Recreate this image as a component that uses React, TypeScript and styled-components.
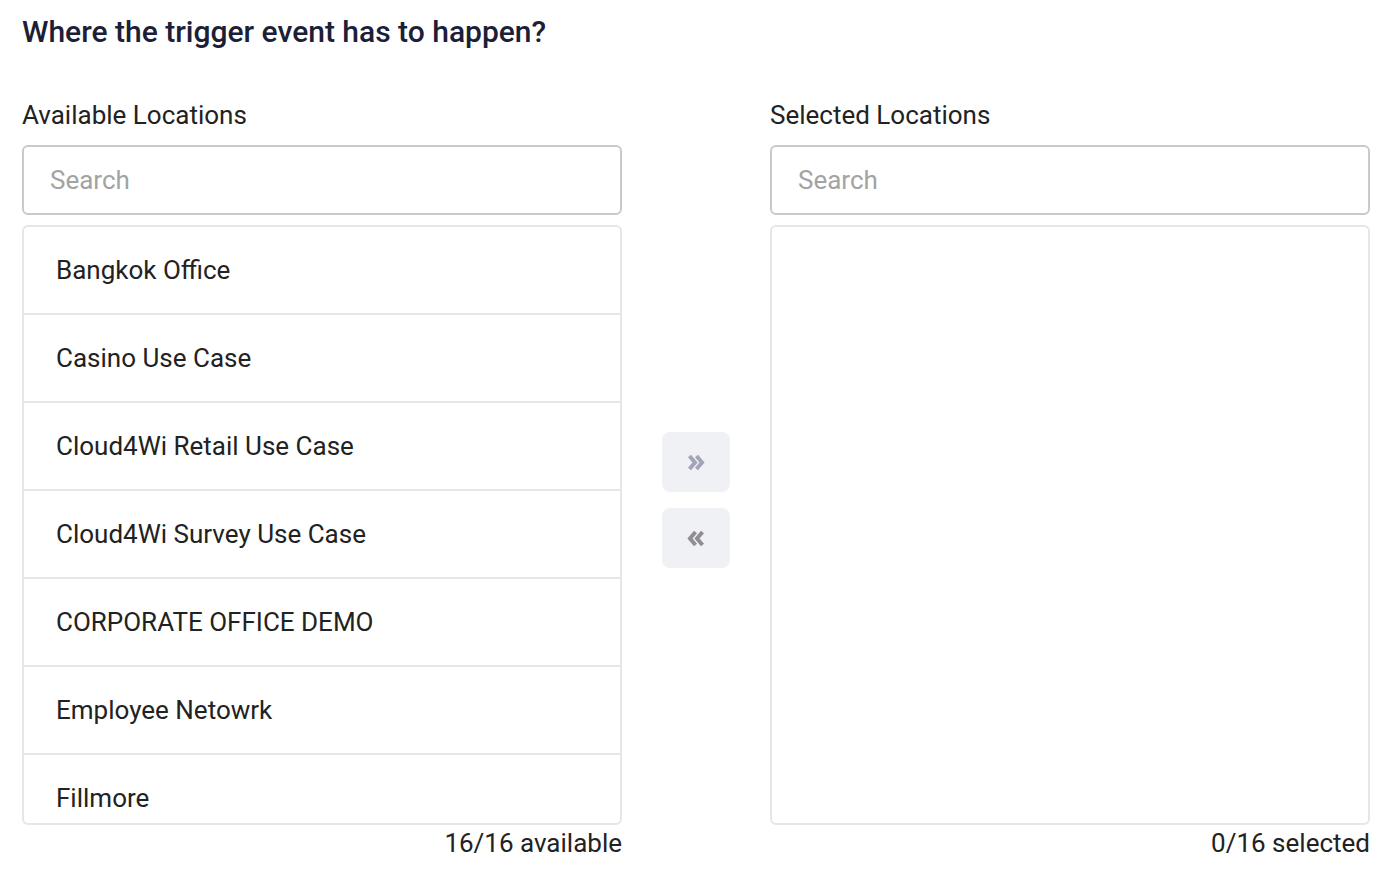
import styled, { createGlobalStyle } from 'styled-components';

const GlobalStyle = createGlobalStyle`
    body {
        margin: 0;
        background: #fff;
        font-family: Roboto, "Liberation Sans", sans-serif;
    }
`;

const Page = styled.div`
    padding: 16px 12px 0 22px;
`;

const Title = styled.h2`
    margin: 0;
    font-size: 30px;
    line-height: 32px;
    font-weight: 500;
    color: #1b2036;
`;

const Picker = styled.div`
    display: grid;
    grid-template-columns: 600px 148px 600px;
    margin-top: 53px;
`;

const Column = styled.div`
    display: flex;
    flex-direction: column;
`;

const Label = styled.div`
    font-size: 26px;
    line-height: 28px;
    color: #222;
    margin-bottom: 16px;
`;

const SearchInput = styled.input`
    box-sizing: border-box;
    height: 70px;
    width: 100%;
    border: 2px solid #c9c9c9;
    border-radius: 6px;
    padding: 0 26px;
    font-family: inherit;
    font-size: 26px;
    color: #222;
    outline: none;
    &::placeholder {
        color: #a3a3a3;
    }
`;

const ListBox = styled.ul`
    box-sizing: border-box;
    margin: 10px 0 0;
    padding: 0;
    list-style: none;
    height: 600px;
    border: 2px solid #e6e6e6;
    border-radius: 6px;
    overflow: hidden;
`;

const ListItem = styled.li`
    height: 86px;
    border-bottom: 2px solid #e6e6e6;
    display: flex;
    align-items: center;
    padding-left: 32px;
    font-size: 26px;
    color: #222;
    flex-shrink: 0;
`;

const Counter = styled.div`
    margin-top: 4px;
    text-align: right;
    font-size: 26px;
    line-height: 28px;
    color: #222;
`;

const Actions = styled.div`
    display: flex;
    flex-direction: column;
    align-items: center;
    gap: 16px;
    padding-top: 331px;
`;

const MoveButton = styled.button<{ $tone: string }>`
    width: 68px;
    height: 60px;
    border: none;
    border-radius: 8px;
    background: #f0f1f5;
    color: ${p => p.$tone};
    display: flex;
    align-items: center;
    justify-content: center;
    cursor: pointer;
    padding: 0;
`;

const Chevrons = ({ dir }: { dir: 'right' | 'left' }) => (
    <svg width="18" height="17" viewBox="0 0 18 17" fill="none"
        style={{ transform: dir === 'left' ? 'scaleX(-1)' : undefined }}>
        <polyline points="2.5,2 8,8.5 2.5,15" stroke="currentColor" strokeWidth="4" strokeLinejoin="miter" />
        <polyline points="9.5,2 15,8.5 9.5,15" stroke="currentColor" strokeWidth="4" strokeLinejoin="miter" />
    </svg>
);

const locations = [
    'Bangkok Office',
    'Casino Use Case',
    'Cloud4Wi Retail Use Case',
    'Cloud4Wi Survey Use Case',
    'CORPORATE OFFICE DEMO',
    'Employee Netowrk',
    'Fillmore',
];

const App = () => {
    return <Page>
        <GlobalStyle />
        <Title>Where the trigger event has to happen?</Title>
        <Picker>
            <Column>
                <Label>Available Locations</Label>
                <SearchInput placeholder="Search" />
                <ListBox>
                    {locations.map(name => <ListItem key={name}>{name}</ListItem>)}
                </ListBox>
                <Counter>16/16 available</Counter>
            </Column>
            <Actions>
                <MoveButton $tone="#a2a5ba"><Chevrons dir="right" /></MoveButton>
                <MoveButton $tone="#8f8f93"><Chevrons dir="left" /></MoveButton>
            </Actions>
            <Column>
                <Label>Selected Locations</Label>
                <SearchInput placeholder="Search" />
                <ListBox />
                <Counter>0/16 selected</Counter>
            </Column>
        </Picker>
    </Page>
}

export default App;
